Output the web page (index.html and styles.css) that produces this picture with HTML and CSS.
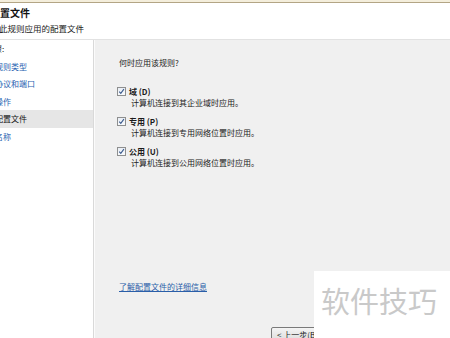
FILE: index.html
```html
<!DOCTYPE html>
<html lang="zh-CN">
<head>
<meta charset="utf-8">
<title>配置文件</title>
<link rel="stylesheet" href="styles.css">
</head>
<body>
<div class="page">
  <div class="topstrip"></div>
  <header class="header">
    <div class="title">配置文件</div>
    <div class="subtitle">指定此规则应用的配置文件</div>
  </header>
  <div class="main">
    <nav class="nav">
      <div class="nav-head">步骤:</div>
      <a class="nav-item">规则类型</a>
      <a class="nav-item">协议和端口</a>
      <a class="nav-item">操作</a>
      <div class="nav-item current">配置文件</div>
      <a class="nav-item">名称</a>
    </nav>
    <section class="content">
      <div class="question">何时应用该规则?</div>
      <div class="options">
        <div class="option">
          <div class="opt-row"><span class="check"><svg viewBox="0 0 7 7" width="7" height="7"><path d="M1.2 3.6 L2.8 5.3 L5.9 1.2" fill="none" stroke="#3a5a8c" stroke-width="1.1"/></svg></span><span class="opt-label">域 (D)</span></div>
          <div class="opt-desc">计算机连接到其企业域时应用。</div>
        </div>
        <div class="option">
          <div class="opt-row"><span class="check"><svg viewBox="0 0 7 7" width="7" height="7"><path d="M1.2 3.6 L2.8 5.3 L5.9 1.2" fill="none" stroke="#3a5a8c" stroke-width="1.1"/></svg></span><span class="opt-label">专用 (P)</span></div>
          <div class="opt-desc">计算机连接到专用网络位置时应用。</div>
        </div>
        <div class="option">
          <div class="opt-row"><span class="check"><svg viewBox="0 0 7 7" width="7" height="7"><path d="M1.2 3.6 L2.8 5.3 L5.9 1.2" fill="none" stroke="#3a5a8c" stroke-width="1.1"/></svg></span><span class="opt-label">公用 (U)</span></div>
          <div class="opt-desc">计算机连接到公用网络位置时应用。</div>
        </div>
      </div>
      <div class="spacer"></div>
      <a class="more">了解配置文件的详细信息</a>
      <div class="buttons">
        <button class="btn">&lt; 上一步(B)</button>
      </div>
    </section>
  </div>
  <div class="watermark">软件技巧</div>
</div>
</body>
</html>
```
FILE: styles.css
```css
html, body {
  margin: 0;
  padding: 0;
  background: #ffffff;
}
body {
  width: 450px;
  height: 338px;
  overflow: hidden;
  font-family: "Noto Sans CJK SC", "Noto Sans", sans-serif;
  color: #1e1e1e;
}
.page {
  position: relative;
  width: 450px;
  height: 338px;
  display: flex;
  flex-direction: column;
  overflow: hidden;
}
.topstrip {
  height: 2px;
  background: #f4eedc;
  border-bottom: 1px solid #b3a585;
  flex: none;
}
.header {
  height: 37px;
  background: #ffffff;
  border-bottom: 1px solid #e2e2e2;
  flex: none;
  box-sizing: border-box;
  padding-top: 3px;
}
.title {
  margin-left: -10px;
  font-size: 10px;
  font-weight: bold;
  line-height: 14px;
  color: #111;
}
.subtitle {
  margin-left: -18px;
  margin-top: 2px;
  font-size: 8.5px;
  line-height: 12px;
  color: #222;
}
.main {
  flex: 1;
  display: flex;
  background: #f0f0f0;
}
.nav {
  width: 93px;
  background: #ffffff;
  border-right: 1px solid #d9d9d9;
  display: flex;
  flex-direction: column;
  font-size: 8px;
}
.nav-head {
  line-height: 17.5px;
  margin-left: -14px;
  color: #111;
}
.nav-item {
  display: block;
  line-height: 17.5px;
  text-indent: -5px;
  color: #1f5fb0;
}
.nav-item.current {
  background: #e6e6e6;
  color: #111;
}
.content {
  flex: 1;
  border-left: 1px solid #fbfbfb;
  display: flex;
  flex-direction: column;
  padding: 17px 0 0 24px;
  font-size: 8px;
}
.question {
  line-height: 12px;
  color: #222;
}
.options {
  display: flex;
  flex-direction: column;
  gap: 8px;
  margin-top: 17px;
}
.opt-row {
  display: flex;
  align-items: center;
  height: 11px;
  margin-left: -2px;
}
.check {
  width: 7px;
  height: 7px;
  border: 1px solid #8e8f8f;
  background: linear-gradient(#e9eef5, #f8fafc);
  display: flex;
  margin-right: 3px;
}
.check svg {
  display: block;
}
.opt-label {
  font-weight: bold;
  line-height: 11px;
  color: #1a1a1a;
}
.opt-desc {
  line-height: 11px;
  margin-left: 12px;
  color: #222;
}
.spacer {
  flex: 1;
}
.more {
  display: block;
  color: #2a5ea8;
  text-decoration: underline;
  line-height: 12px;
}
.buttons {
  display: flex;
  padding-left: 152px;
  margin-top: 34px;
  height: 11px;
}
.btn {
  font-family: "Noto Sans CJK SC", "Noto Sans", sans-serif;
  font-size: 8px;
  line-height: 12px;
  height: 15px;
  padding: 0 5px;
  border: 1px solid #7a7a7a;
  border-radius: 2px;
  background: linear-gradient(#f4f4f4, #dcdcdc);
  color: #222;
  white-space: nowrap;
  flex: none;
}
.watermark {
  position: absolute;
  left: 314px;
  top: 271px;
  width: 136px;
  height: 67px;
  background: #ffffff;
  box-sizing: border-box;
  padding: 11px 0 0 7px;
  font-size: 29px;
  line-height: 36px;
  color: #c9c9c9;
  white-space: nowrap;
}
```
